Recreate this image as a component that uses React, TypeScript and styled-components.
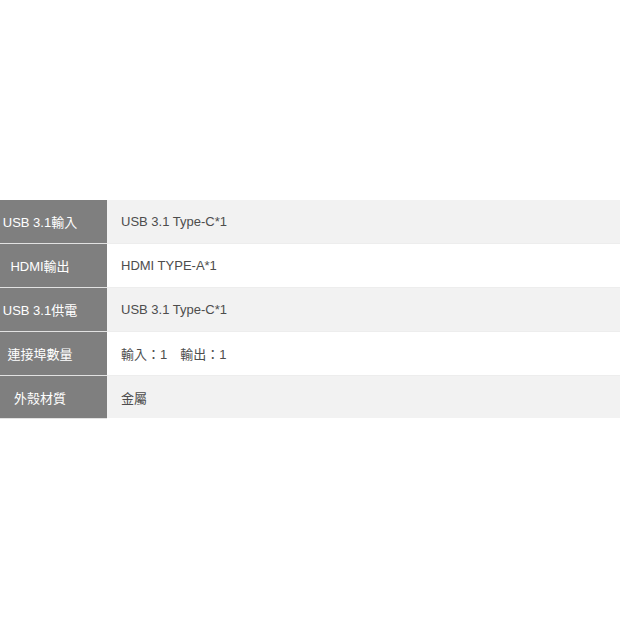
import React from "react";
import styled, { createGlobalStyle } from "styled-components";

const Global = createGlobalStyle`
  html, body { margin: 0; padding: 0; background: #ffffff; }
  body { font-family: Arial, "Liberation Sans", "Noto Sans CJK TC", sans-serif; }
`;

const Page = styled.div`
  width: 620px;
  height: 620px;
  padding-top: 200px;
  box-sizing: border-box;
`;

const Table = styled.div`
  display: flex;
  flex-direction: column;
  width: 620px;
`;

const Row = styled.div<{ $shade: boolean }>`
  display: grid;
  grid-template-columns: 107px 1fr;
  column-gap: 1px;
  height: 44px;
  background: ${(p) => (p.$shade ? "#f2f2f2" : "#ffffff")};
  border-bottom: 1px solid #ededed;
  box-sizing: border-box;
  &:last-child { border-bottom: none; height: 42px; }
`;

const Label = styled.div`
  display: flex;
  align-items: center;
  justify-content: center;
  padding-right: 27px;
  background: #7f7f7f;
  color: #ffffff;
  font-size: 13px;
  white-space: nowrap;
  box-shadow: 0 1px 0 #e2e2e2;
`;

const Value = styled.div`
  display: flex;
  align-items: center;
  padding-left: 13px;
  color: #4d4d4d;
  font-size: 13px;
  white-space: pre;
`;

const rows: [string, string][] = [
  ["USB 3.1輸入", "USB 3.1 Type-C*1"],
  ["HDMI輸出", "HDMI TYPE-A*1"],
  ["USB 3.1供電", "USB 3.1 Type-C*1"],
  ["連接埠數量", "輸入：1　輸出：1"],
  ["外殼材質", "金屬"],
];

export default function App() {
  return (
    <>
      <Global />
      <Page>
        <Table>
          {rows.map(([k, v], i) => (
            <Row key={k} $shade={i % 2 === 0}>
              <Label>{k}</Label>
              <Value>{v}</Value>
            </Row>
          ))}
        </Table>
      </Page>
    </>
  );
}
